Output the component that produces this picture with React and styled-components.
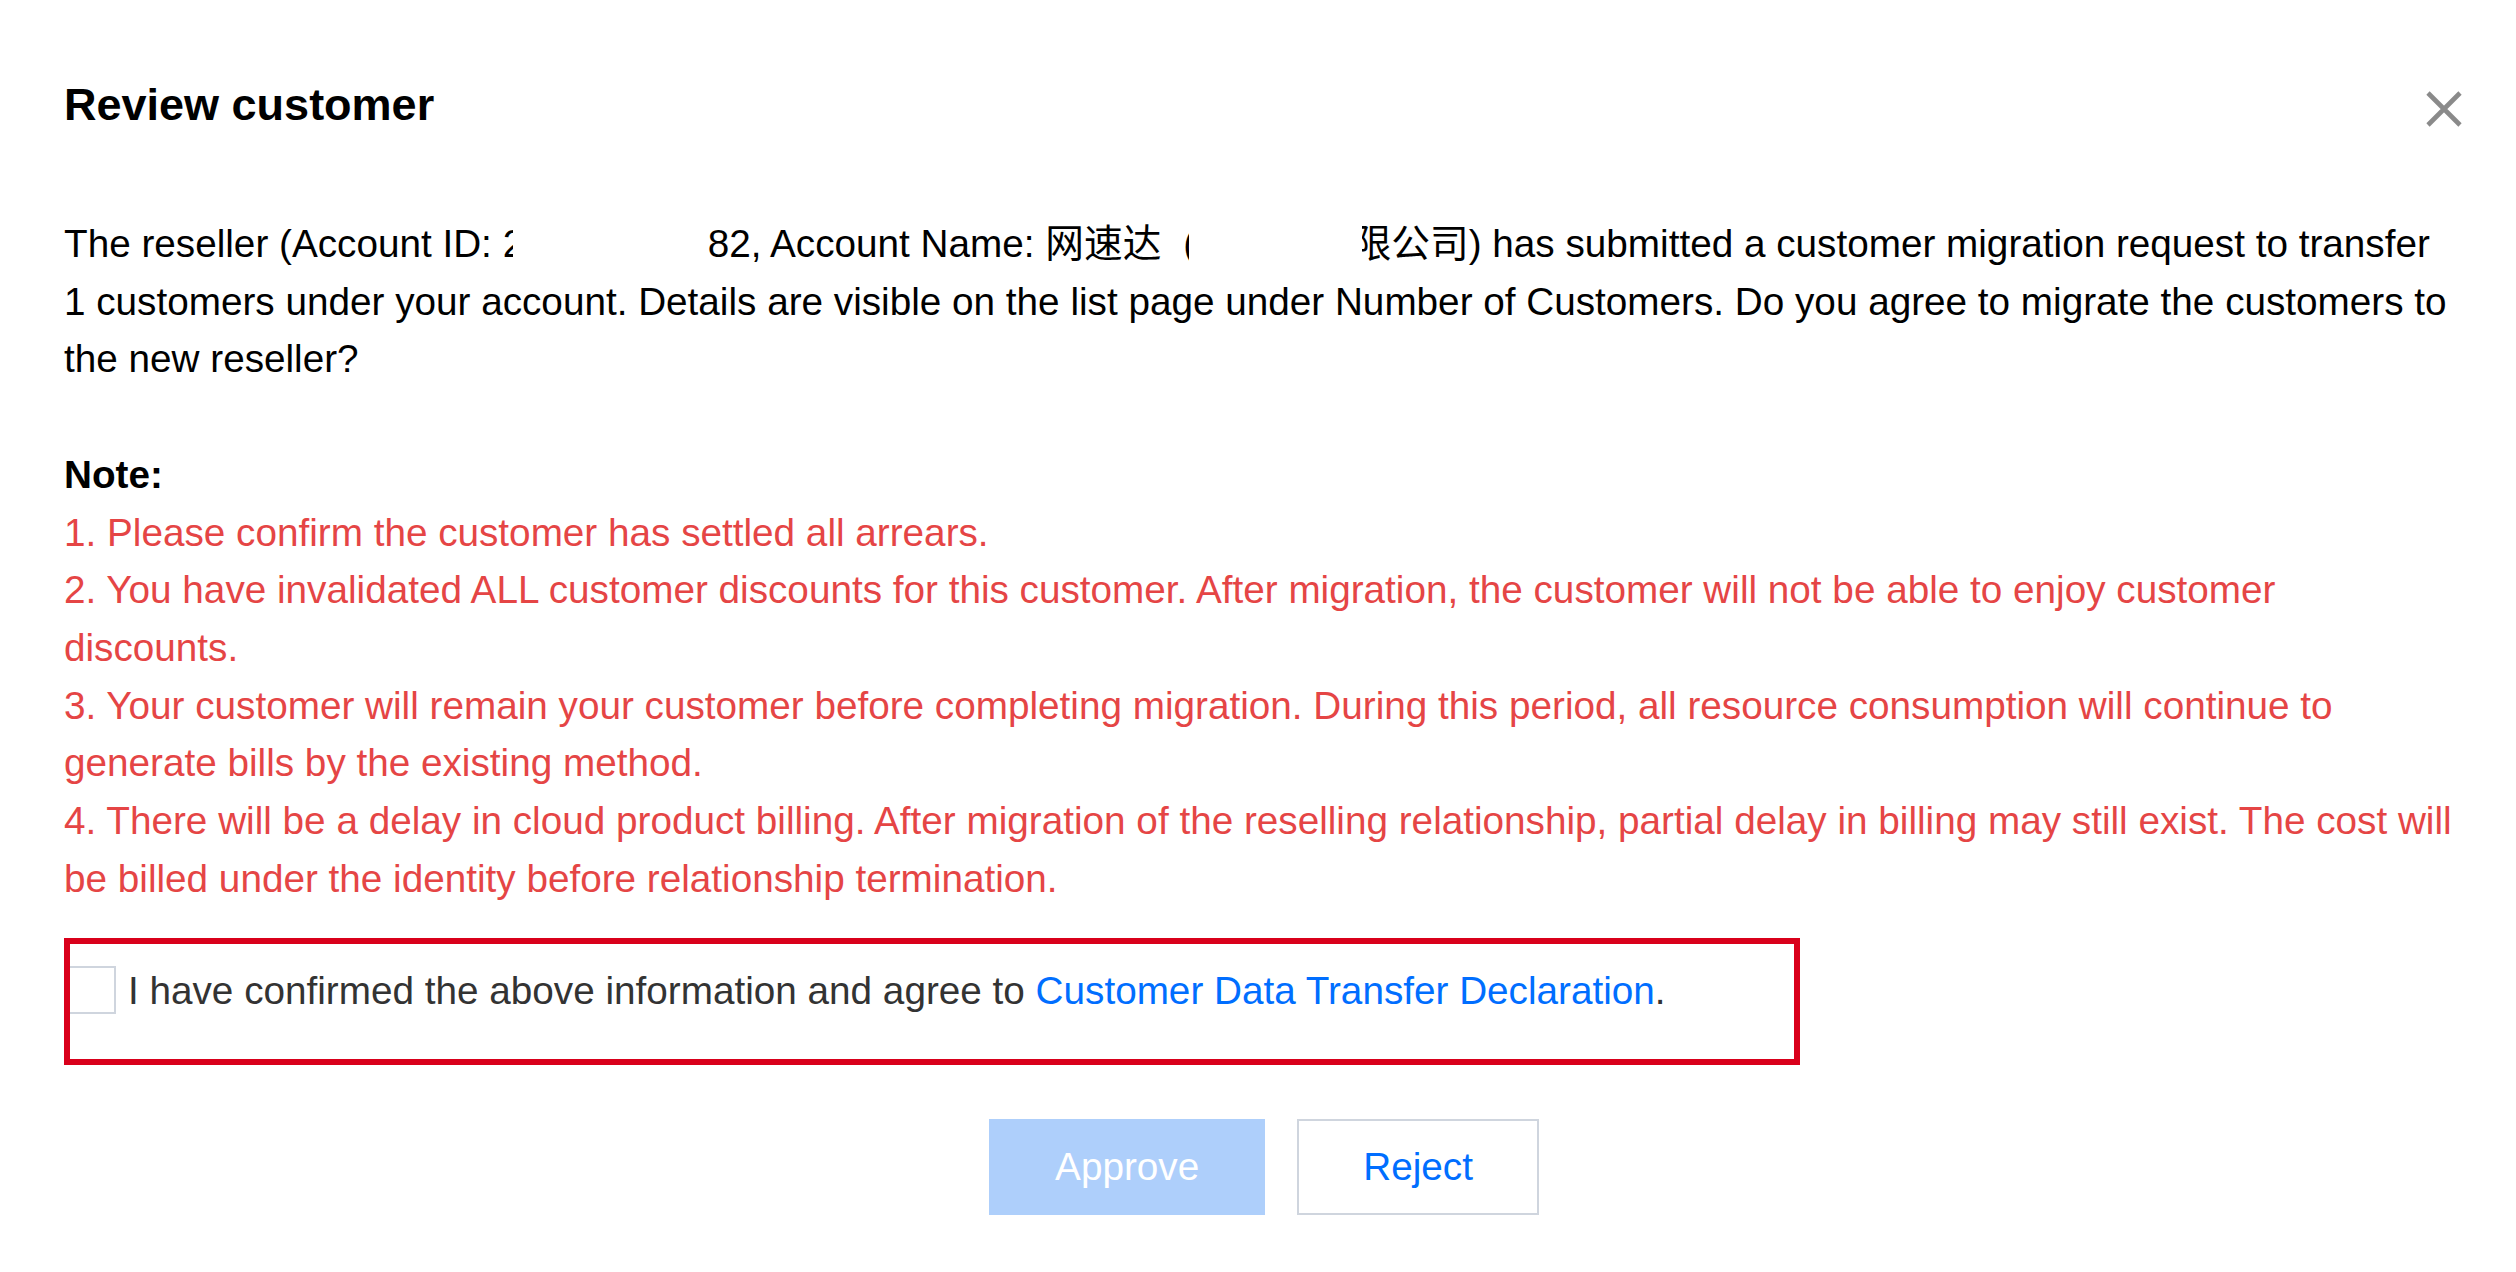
import React from 'react'
import styled, { createGlobalStyle } from 'styled-components'

const GlobalStyle = createGlobalStyle`
  html,
  body {
    margin: 0;
    padding: 0;
    background-color: #fff;
  }

  body {
    font-family: "Liberation Sans", Arial, "Noto Sans CJK SC", sans-serif;
    -webkit-font-smoothing: antialiased;
  }
`

const FONT_SIZE = 38.7

// "\n" marks where the original dialog wraps the line
const notes = [
  '1. Please confirm the customer has settled all arrears.',
  '2. You have invalidated ALL customer discounts for this customer. After migration, the customer will not be able to enjoy customer\ndiscounts.',
  '3. Your customer will remain your customer before completing migration. During this period, all resource consumption will continue to generate bills by the existing method.',
  '4. There will be a delay in cloud product billing. After migration of the reselling relationship, partial delay in billing may still exist. The cost will be billed under the identity before relationship termination.',
]

const CloseIcon = () => (
  <svg width="40" height="40" viewBox="0 0 40 40" fill="none">
    <path
      d="M4 4 L36 36 M36 4 L4 36"
      stroke="currentColor"
      strokeWidth="4.6"
    />
  </svg>
)

export default function App() {
  return (
    <>
      <GlobalStyle />
      <S_Dialog role="dialog" aria-labelledby="review-title">
        <S_Header>
          <S_Title id="review-title">Review customer</S_Title>
          <S_Close aria-label="Close">
            <CloseIcon />
          </S_Close>
        </S_Header>

        <S_Body>
          <S_Paragraph>
            The reseller (Account ID: <S_Clip $width={10}>2</S_Clip>
            <S_Gap $width={195} />
            82, Account Name: 网速达
            <S_Gap $width={22} />
            <S_Clip $width={6}>(</S_Clip>
            <S_Gap $width={173} />
            <S_Clip $width={29}>
              <S_ClipTail $shift={29}>限</S_ClipTail>
            </S_Clip>
            公司) has submitted a customer migration request to transfer
            <br />1 customers under your account. Details are visible on the
            list page under Number of Customers. Do you agree to migrate the
            customers to the new reseller?
          </S_Paragraph>

          <S_Notes>
            <S_NoteTitle>Note:</S_NoteTitle>
            {notes.map((note) => (
              <S_NoteItem key={note}>{note}</S_NoteItem>
            ))}
          </S_Notes>
        </S_Body>

        <S_Highlight>
          <S_Agreement>
            <S_CheckBox role="checkbox" aria-checked="false" />
            <S_AgreementText>
              I have confirmed the above information and agree to{' '}
              <S_Link href="#">Customer Data Transfer Declaration</S_Link>.
            </S_AgreementText>
          </S_Agreement>
        </S_Highlight>

        <S_Actions>
          <S_Button $primary disabled>
            Approve
          </S_Button>
          <S_Button>Reject</S_Button>
        </S_Actions>
      </S_Dialog>
    </>
  )
}

const S_Dialog = styled.section`
  width: 2400px;
  padding: 76px 52px 0 64px;
`

const S_Header = styled.header`
  display: flex;
  align-items: center;
  justify-content: space-between;

  height: 58px;
`

const S_Title = styled.h2`
  margin: 0;

  font-size: 45px;
  font-weight: 700;
  line-height: 58px;
  color: #000;
`

const S_Close = styled.button`
  display: flex;
  margin: 7px 0 0 0;
  padding: 0;

  background: none;
  border: none;
  color: #8a8a8a;

  cursor: pointer;
`

const S_Body = styled.div`
  width: 2420px;
  margin-top: 81px;

  font-size: ${FONT_SIZE}px;
  line-height: 57.7px;
  color: #000;
`

const S_Paragraph = styled.p`
  margin: 0;
`

const S_Clip = styled.span`
  display: inline-block;
  width: ${(p) => p.$width}px;
  height: 57.7px;

  overflow: hidden;
  white-space: nowrap;
  vertical-align: top;
`

const S_ClipTail = styled.span`
  display: inline-block;
  margin-left: ${(p) => p.$shift - FONT_SIZE}px;
`

const S_Gap = styled.span`
  display: inline-block;
  width: ${(p) => p.$width}px;
`

const S_Notes = styled.div`
  margin-top: 57.7px;
`

const S_NoteTitle = styled.h4`
  margin: 0;

  font-size: inherit;
  font-weight: 700;
  color: #000;
`

const S_NoteItem = styled.p`
  margin: 0;

  color: #e54545;
  white-space: pre-line;
`

const S_Highlight = styled.div`
  position: relative;
  width: 1736px;
  margin-top: 30.6px;
  padding: 22px 0 45px 4px;
  box-sizing: border-box;

  &::after {
    content: '';
    position: absolute;
    inset: 0;

    border: 6px solid #d9001b;
    pointer-events: none;
  }
`

const S_Agreement = styled.label`
  display: flex;
  align-items: center;
  gap: 12px;

  font-size: ${FONT_SIZE}px;
  line-height: 57.7px;
  color: #333;
`

const S_AgreementText = styled.span`
  margin-top: 2px;
`

const S_CheckBox = styled.span`
  flex-shrink: 0;
  width: 48px;
  height: 48px;
  box-sizing: border-box;

  background-color: #fff;
  border: 2px solid #cfd5de;
`

const S_Link = styled.a`
  color: #006eff;
  text-decoration: none;
`

const S_Actions = styled.div`
  display: flex;
  justify-content: center;
  gap: 32px;

  margin-top: 54px;
`

const S_Button = styled.button`
  height: 96px;
  padding: 0 64px;
  box-sizing: border-box;

  font-family: inherit;
  font-size: ${FONT_SIZE}px;

  background-color: ${(p) => (p.$primary ? '#aecffb' : '#fff')};
  color: ${(p) => (p.$primary ? '#fff' : '#006eff')};
  border: 2px solid ${(p) => (p.$primary ? '#aecffb' : '#cfd5de')};

  cursor: ${(p) => (p.disabled ? 'not-allowed' : 'pointer')};
`
